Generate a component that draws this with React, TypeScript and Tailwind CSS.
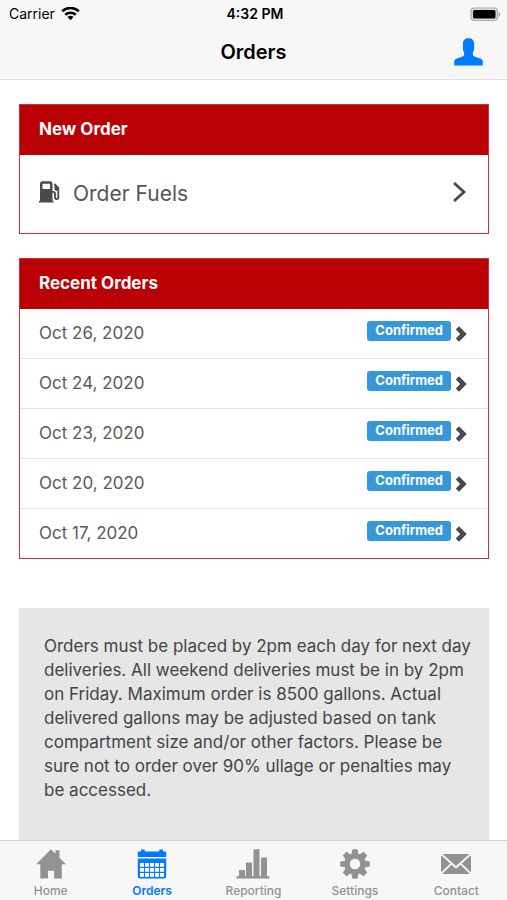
import React from "react";
import clsx from "clsx";

const ORDERS = [
  { id: 1, date: "Oct 26, 2020", status: "Confirmed" },
  { id: 2, date: "Oct 24, 2020", status: "Confirmed" },
  { id: 3, date: "Oct 23, 2020", status: "Confirmed" },
  { id: 4, date: "Oct 20, 2020", status: "Confirmed" },
  { id: 5, date: "Oct 17, 2020", status: "Confirmed" },
];

const TABS = [
  { label: "Home", icon: <HomeIcon /> },
  { label: "Orders", icon: <CalendarIcon /> },
  { label: "Reporting", icon: <ChartIcon /> },
  { label: "Settings", icon: <GearIcon /> },
  { label: "Contact", icon: <MailIcon /> },
];

export default function App() {
  const [tab, setTab] = React.useState("Orders");

  return (
    <div className="flex h-screen flex-col bg-white font-['Inter','Liberation_Sans',sans-serif] text-[#4a4a4a]">
      <header className="border-b border-[#e2e2e2] bg-[#f7f7f7] text-black">
        <StatusBar />
        <div className="grid h-[51px] grid-cols-[1fr_auto_1fr] items-center px-6 pb-1">
          <h1 className="col-start-2 text-xl font-semibold">Orders</h1>
          <button type="button" aria-label="Profile" className="justify-self-end text-[#007aff]">
            <PersonIcon />
          </button>
        </div>
      </header>

      <main className="min-h-0 flex-1 overflow-y-auto pl-[19px] pr-[18px] pt-6 [scrollbar-width:none]">
        <Card title="New Order">
          <button type="button" className="flex h-[78px] w-full items-center pb-1 pl-[19px] pr-[21px] text-left">
            <FuelIcon />
            <span className="ml-[13px] flex-1 pt-1 text-[21px] text-[#555]">Order Fuels</span>
            <ThinChevron />
          </button>
        </Card>

        <div className="mt-6">
          <Card title="Recent Orders">
            <ul className="divide-y divide-[#e4e4e4]">
              {ORDERS.map(o => (
                <li key={o.id}>
                  <button type="button" className="flex h-[49px] w-full items-center pl-[19px] pr-[21px] text-left">
                    <span className="flex-1 text-[17px] text-[#5a5a5a]">{o.date}</span>
                    <Badge text={o.status} />
                    <BoldChevron />
                  </button>
                </li>
              ))}
            </ul>
          </Card>
        </div>

        <p className="mt-[49px] bg-[#e6e6e6] pb-12 pl-[25px] pr-[14px] pt-[26px] text-[17px] leading-6 text-[#444]">
          Orders must be placed by 2pm each day for next day deliveries. All weekend deliveries must
          be in by 2pm on Friday. Maximum order is 8500 gallons. Actual delivered gallons may be
          adjusted based on tank compartment size and/or other factors. Please be sure not to order
          over 90% ullage or penalties may be accessed.
        </p>
      </main>

      <nav className="grid h-[60px] grid-cols-5 border-t border-[#d4d4d4] bg-[#f7f7f7]">
        {TABS.map(t => (
          <button
            key={t.label}
            type="button"
            onClick={() => setTab(t.label)}
            className={clsx(
              "flex flex-col items-center pt-2 text-xs leading-4",
              t.label === tab ? "font-semibold text-[#007aff]" : "font-medium text-[#929292]"
            )}
          >
            {t.icon}
            <span className="mt-1">{t.label}</span>
          </button>
        ))}
      </nav>
    </div>
  );
}

function StatusBar() {
  return (
    <div className="grid h-7 grid-cols-[1fr_auto_1fr] items-center pl-[9px] pr-[6px] text-sm">
      <div className="flex items-center gap-1.5">
        <span>Carrier</span>
        <svg width="19" height="15" viewBox="0 0 19 15" fill="none" stroke="currentColor" strokeWidth="2.6">
          <path d="M1.2 4.3a12 12 0 0 1 16.6 0" />
          <path d="M4.2 7.8a7.7 7.7 0 0 1 10.6 0" />
          <path d="M9.5 13.2 6.5 10.1a4.4 4.4 0 0 1 6 0z" fill="currentColor" stroke="none" />
        </svg>
      </div>
      <span className="font-semibold">4:32 PM</span>
      <svg className="justify-self-end" width="31" height="15" viewBox="0 0 31 15">
        <rect x="1" y="1" width="26.5" height="12.5" rx="3.5" fill="#ddd" stroke="#aaa" strokeWidth="1.2" />
        <rect x="3" y="3" width="22.5" height="8.5" rx="1.5" fill="#000" />
        <path d="M28.6 5c2.2.9 2.2 4.1 0 5z" fill="#aaa" />
      </svg>
    </div>
  );
}

function Card({ title, children }: { title: string; children: React.ReactNode }) {
  return (
    <section className="border border-[#cc2f3a]">
      <h2 className="flex h-[50px] items-center bg-[#b90005] px-[19px] text-[17px] font-bold text-white">
        {title}
      </h2>
      {children}
    </section>
  );
}

function Badge({ text }: { text: string }) {
  return (
    <span className="mb-1.5 mr-1 rounded-[3px] bg-[#3498db] px-2 pb-0.5 text-[13px] font-bold leading-[18px] text-white">
      {text}
    </span>
  );
}

function ThinChevron() {
  return (
    <svg width="15" height="20" viewBox="0 0 15 20" fill="none" stroke="#4a4a4a" strokeWidth="2.8">
      <path d="M2 1 12 10 2 19" />
    </svg>
  );
}

function BoldChevron() {
  return (
    <svg width="12" height="16" viewBox="0 0 12 16" fill="#4a4a4a">
      <path d="M4 .3 11.7 8 4 15.7.8 12.5 5.2 8 .8 3.5z" />
    </svg>
  );
}

function PersonIcon() {
  return (
    <svg width="29" height="28" viewBox="0 0 29 28" fill="currentColor">
      <path d="M14.5.3c3.4 0 5.6 2 5.6 5.2v5.3c0 1.5-.5 2.6-1.2 3.3v2.3c0 1 .5 1.500 1.500 2l6.200 2.300c1.500.7 2.200 1.500 2.200 2.900v3.900H.2V23.600c0-1.400.7-2.200 2.200-2.900l6.200-2.300c1-.5 1.500-1 1.500-2v-2.300c-.7-.7-1.200-1.800-1.200-3.300V5.500C8.900 2.300 11.100.3 14.500.3z" />
    </svg>
  );
}

function FuelIcon() {
  return (
    <svg width="21" height="22" viewBox="0 0 21 22" fill="#4a4a4a">
      <path fillRule="evenodd" d="M3.2.3H11a2.500 2.500 0 0 1 2.500 2.500V19.700h1v1.800H0v-1.800h1V2.800A2.500 2.500 0 0 1 3.200.3zM3.500 2.800v5.200H11V2.800z" />
      <path d="M13 10.800h1.200c1.200 0 1.800.8 1.800 1.900v3.900c0 2.100 3.300 2.100 3.300 0V7.200L15.400 2.800" fill="none" stroke="#4a4a4a" strokeWidth="1.800" />
      <path d="M15.500 3.500v4.300c0 1.200.7 1.900 1.800 2h2V6.500z" />
    </svg>
  );
}

function HomeIcon() {
  return (
    <svg width="30" height="30" viewBox="0 0 30 30" fill="currentColor">
      <path d="M15 .3 19.5 4.800V1.200h4v7.500L30 15.300h-4.200v14.200h-7.600v-7.800h-6.200v7.800H4.300V15.300H0z" />
    </svg>
  );
}

function CalendarIcon() {
  const xs = [3, 8, 13, 18, 23];
  const ys = [14, 19, 24];
  return (
    <svg width="30" height="30" viewBox="0 0 30 30" fill="currentColor">
      <path d="M.8 2.5h3.3V.5h3.600v2h14.600v-2h3.600v2h3.300V8H.8z" />
      <path d="M.8 9.500h28.400v18a2 2 0 0 1-2 2H2.800a2 2 0 0 1-2-2z" />
      {ys.map(y => xs.map(x => <rect key={`${x}-${y}`} x={x} y={y} width="4" height="3.8" fill="#fff" />))}
    </svg>
  );
}

function ChartIcon() {
  return (
    <svg width="34" height="30" viewBox="0 0 34 30" fill="currentColor">
      <path d="M.5 27.2h33v2.300H.5zM3 21h6v7H3zM10 13.500h6V28h-6zM17.500.2h6V28h-6zM25 8.500h6V28h-6z" />
    </svg>
  );
}

function GearIcon() {
  const angles = [0, 45, 90, 135, 180, 225, 270, 315];
  return (
    <svg width="30" height="30" viewBox="0 0 30 30" fill="currentColor">
      <circle cx="15" cy="15" r="8" fill="none" stroke="currentColor" strokeWidth="5.4" />
      {angles.map(a => (
        <path key={a} d="M11.5 6 12.2 1a1 1 0 0 1 .9-.8h3.800a1 1 0 0 1 .9.800L18.500 6z" transform={`rotate(${a} 15 15)`} />
      ))}
    </svg>
  );
}

function MailIcon() {
  return (
    <svg width="30" height="30" viewBox="0 0 30 30" fill="currentColor">
      <path d="M1.500 5h27L15 17zM0 6.200 9.300 14.600 0 23.500zM30 6.200V23.500L20.700 14.600zM10.500 15.800 15 19.800 19.500 15.800 28.800 25H1.200z" />
    </svg>
  );
}
